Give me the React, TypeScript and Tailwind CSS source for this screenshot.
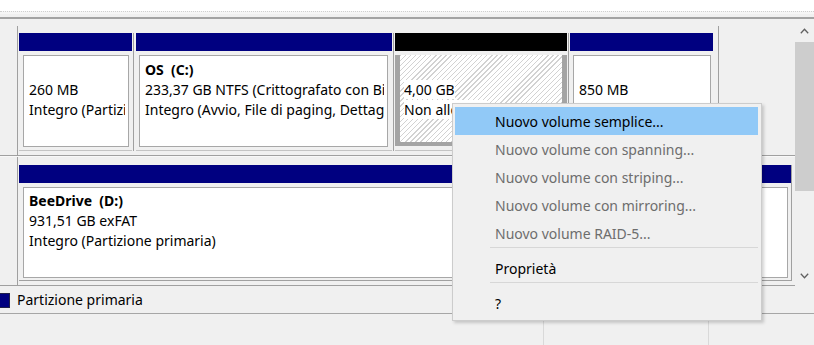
import React from "react";

function Box({ lines, pl, pr }: { lines: React.ReactNode[]; pl: string; pr: string }) {
  return (
    <div className={`flex-1 flex flex-col pt-[4px] pb-[3px] ${pl} ${pr}`}>
      <div className="flex-1 bg-white border border-[#a7a7a7] pl-[5px] pr-[3px] pt-[4px]">
        <div className="overflow-hidden whitespace-pre leading-[20px]">
          {lines.map((l, i) => (
            <div key={i} className="h-[20px]">
              {l}
            </div>
          ))}
        </div>
      </div>
    </div>
  );
}

function Sep({ ml, mr }: { ml: string; mr: string }) {
  return <div className={`w-px h-[118px] bg-[#a0a0a0] ${ml} ${mr}`} />;
}

export default function App() {
  return (
    <div className="w-[814px] h-[345px] bg-[#f0f0f0] overflow-hidden relative font-['Noto_Sans',sans-serif] text-[14px] text-black">
      {/* top strip */}
      <div className="h-[11px] bg-white" />
      <div className="h-[3px] bg-[#f6f6f6] border-t border-dotted border-[#cfcfcf]" />
      <div className="h-[3px]" />
      <div className="h-[2px] bg-[#a3a3a3]" />

      {/* main */}
      <div className="flex h-[268px]">
        <div className="w-[795px] flex flex-col pt-[7px]">
          {/* row 1 */}
          <div className="flex h-[129px]">
            <div className="w-[18px] border-r border-[#a0a0a0]" />
            <div className="w-[701px] border-r border-[#a0a0a0] flex items-start pt-[7px] pl-[1px]">
              {/* P1 */}
              <div className="w-[113px] h-[118px] flex flex-col border-b border-[#c4c4c4]">
                <div className="h-[18px] bg-[#000080]" />
                <Box pl="pl-[4px]" pr="pr-[3px]" lines={["", "260 MB", "Integro (Partizione primaria)"]} />
              </div>
              <Sep ml="ml-[1px]" mr="mr-[2px]" />
              {/* P2 */}
              <div className="w-[256px] h-[118px] flex flex-col border-b border-[#c4c4c4]">
                <div className="h-[18px] bg-[#000080]" />
                <Box
                  pl="pl-[3px]"
                  pr="pr-[4px]"
                  lines={[
                    <span className="font-bold">OS  (C:)</span>,
                    "233,37 GB NTFS (Crittografato con BitLocker)",
                    "Integro (Avvio, File di paging, Dettagli arresto anomalo)",
                  ]}
                />
              </div>
              <Sep ml="ml-[1px]" mr="mr-[1px]" />
              {/* P3 unallocated, selected */}
              <div className="w-[172px] h-[118px] flex flex-col border-b border-[#c4c4c4]">
                <div className="h-[18px] bg-black" />
                <div className="flex-1 flex flex-col pt-[4px] pb-[4px]">
                  <div className="flex-1 border-l-[5px] border-r-[5px] border-b-[4px] border-[#a4a4a4] bg-[repeating-linear-gradient(135deg,#d2d2d2_0px,#d2d2d2_1px,#ffffff_1px,#ffffff_3.6px)] pl-[4px] pt-[5px]">
                    <div className="overflow-hidden whitespace-pre leading-[20px]">
                      <div className="h-[20px]" />
                      <div className="h-[20px]">
                        <span className="bg-white">4,00 GB</span>
                      </div>
                      <div className="h-[20px]">
                        <span className="bg-white">Non allocato</span>
                      </div>
                    </div>
                  </div>
                </div>
              </div>
              <Sep ml="ml-[1px]" mr="mr-[1px]" />
              {/* P4 */}
              <div className="w-[143px] h-[118px] flex flex-col border-b border-[#c4c4c4]">
                <div className="h-[18px] bg-[#000080]" />
                <Box pl="pl-[3px]" pr="pr-[2px]" lines={["", "850 MB", "Integro (Partizione di ripristino)"]} />
              </div>
            </div>
          </div>
          <div className="h-px bg-[#a0a0a0]" />
          <div className="h-px bg-[#f8f8f8]" />
          {/* row 2 */}
          <div className="flex h-[129px] border-b border-[#a0a0a0]">
            <div className="w-[18px] border-r border-[#a0a0a0]" />
            <div className="flex-1 flex items-start pt-[8px] pl-[1px]">
              <div className="w-[773px] h-[116px] flex flex-col border-r border-b border-[#a0a0a0]">
                <div className="h-[18px] bg-[#000080]" />
                <div className="flex-1 flex flex-col pt-[4px] pb-[2px] pl-[4px] pr-[3px]">
                  <div className="flex-1 bg-white border border-[#a7a7a7] pl-[5px] pr-[3px] pt-[3px]">
                    <div className="overflow-hidden whitespace-pre leading-[20px]">
                      <div className="h-[20px] font-bold">BeeDrive  (D:)</div>
                      <div className="h-[20px]">931,51 GB exFAT</div>
                      <div className="h-[20px]">Integro (Partizione primaria)</div>
                    </div>
                  </div>
                </div>
              </div>
            </div>
          </div>
        </div>
        {/* scrollbar */}
        <div className="w-[19px] flex flex-col">
          <div className="h-[23px] flex items-center justify-center">
            <svg width="9" height="6" viewBox="0 0 9 6">
              <polyline points="0.8,5.2 4.5,1.3 8.2,5.2" fill="none" stroke="#606060" strokeWidth="1.3" />
            </svg>
          </div>
          <div className="h-[149px] bg-[#cdcdcd]" />
          <div className="flex-1" />
          <div className="h-[22px] flex items-center justify-center">
            <svg width="9" height="6" viewBox="0 0 9 6">
              <polyline points="0.8,0.8 4.5,4.7 8.2,0.8" fill="none" stroke="#606060" strokeWidth="1.3" />
            </svg>
          </div>
        </div>
      </div>

      {/* legend */}
      <div className="h-[26px] flex items-center">
        <div className="w-[10px] h-[15px] bg-[#000080] border-r border-y border-[#20204a]" />
        <span className="ml-[7px] leading-[20px]">Partizione primaria</span>
      </div>
      <div className="h-px bg-[#a6a6a6]" />
      {/* status bar */}
      <div className="h-[31px] flex">
        <div className="w-[543px]" />
        <div className="w-px mt-[7px] bg-[#d9d9d9]" />
        <div className="w-[164px]" />
        <div className="w-px mt-[7px] bg-[#d9d9d9]" />
      </div>

      {/* context menu */}
      <div className="absolute left-[452px] top-[103px] w-[310px] h-[218px] bg-[#f0f0f0] border border-[#cccccc] shadow-[2px_2px_3px_rgba(0,0,0,0.18)] pt-[3px] pl-[2px] pr-[3px]">
        <div className="h-[28px] flex items-center pl-[40px] bg-[#91c9f7] text-black">Nuovo volume semplice...</div>
        <div className="h-[28px] flex items-center pl-[40px] text-[#6d6d6d]">Nuovo volume con spanning...</div>
        <div className="h-[28px] flex items-center pl-[40px] text-[#6d6d6d]">Nuovo volume con striping...</div>
        <div className="h-[28px] flex items-center pl-[40px] text-[#6d6d6d]">Nuovo volume con mirroring...</div>
        <div className="h-[28px] flex items-center pl-[40px] text-[#6d6d6d]">Nuovo volume RAID-5...</div>
        <div className="h-px ml-[35px] mb-[6px] bg-[#d7d7d7]" />
        <div className="h-[28px] flex items-center pl-[40px] text-black">Proprietà</div>
        <div className="h-px ml-[35px] mb-[6px] bg-[#d7d7d7]" />
        <div className="h-[28px] flex items-center pl-[40px] text-black">?</div>
      </div>
    </div>
  );
}
